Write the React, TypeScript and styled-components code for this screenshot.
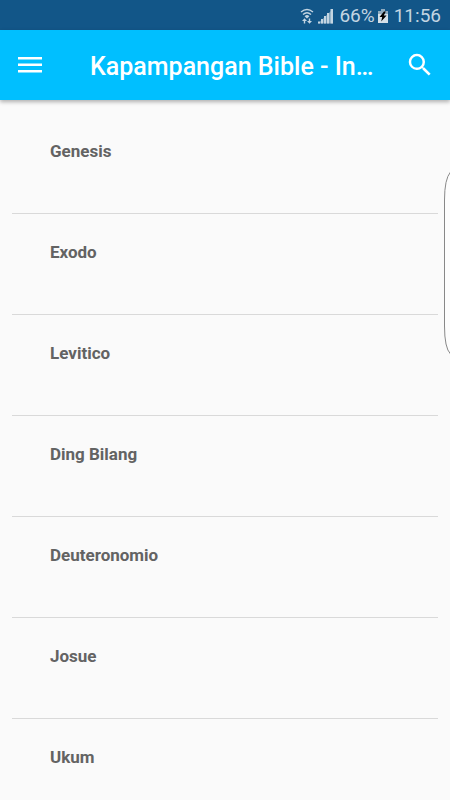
import React from "react";
import styled, { createGlobalStyle } from "styled-components";

const GlobalStyle = createGlobalStyle`
  * { box-sizing: border-box; }
  body {
    margin: 0;
    background: #fafafa;
    font-family: Roboto, "Liberation Sans", sans-serif;
  }
`;

const Screen = styled.div`
  position: relative;
  display: flex;
  flex-direction: column;
  height: 100vh;
  overflow: hidden;
`;

const StatusBar = styled.div`
  display: flex;
  flex: none;
  align-items: center;
  justify-content: flex-end;
  height: 30px;
  padding: 2px 9px 0 0;
  background: #125688;
  color: #c3d5e2;
  font-size: 19px;
  line-height: 28px;

  svg { display: block; }
`;

const StatusIcons = styled.div`
  display: flex;
  align-items: center;
  gap: 4px;
  margin-right: 5px;
`;

const Battery = styled.div`
  margin: 0 6px 0 3px;
`;

const Clock = styled.time`
  font-size: 19px;
`;

const AppBar = styled.header`
  z-index: 1;
  display: flex;
  flex: none;
  align-items: center;
  height: 70px;
  padding: 0 10px;
  background: #00bfff;
  box-shadow: 0 2px 4px rgba(0, 0, 0, 0.3);
`;

const IconButton = styled.button`
  display: flex;
  flex: none;
  align-items: center;
  justify-content: center;
  width: 40px;
  height: 48px;
  padding: 0;
  border: 0;
  background: none;
  color: #fff;
`;

const Title = styled.h1`
  flex: 1;
  min-width: 0;
  margin: 0 8px 0 40px;
  padding-top: 4px;
  overflow: hidden;
  color: #fff;
  font-size: 25px;
  font-weight: 500;
  line-height: 32px;
  white-space: nowrap;
`;

const BookList = styled.ul`
  flex: 1;
  min-height: 0;
  margin: 0;
  padding: 13px 12px 0;
  overflow-y: auto;
  scrollbar-width: none;
  list-style: none;
`;

const BookItem = styled.li`
  border-bottom: 1px solid #d9d9d9;
`;

const BookLink = styled.a`
  display: block;
  height: 100px;
  padding: 26px 38px;
  color: #636363;
  font-size: 17px;
  font-weight: 700;
  line-height: 24px;
  text-decoration: none;
`;

const EdgeHandle = styled.div`
  position: absolute;
  z-index: 2;
  top: 170px;
  right: 0;
  width: 6px;
  height: 187px;

  svg { display: block; }
`;

const books = ["Genesis", "Exodo", "Levitico", "Ding Bilang", "Deuteronomio", "Josue", "Ukum"];

function WifiIcon() {
  return (
    <svg width="14" height="16" viewBox="0 0 14 16" fill="none" stroke="currentColor" aria-hidden="true">
      <path d="M1 4Q7-1 13 4M3 6.5Q7 3 11 6.5" strokeWidth="1.4" />
      <path d="M4.6 8.2Q7 6 9.4 8.2L7 10.5Z" fill="currentColor" stroke="none" />
      <path d="M4.5 15.5v-3M9.5 10.5v3" strokeWidth="1.4" />
      <path d="M2 13L4.5 10.3 7 13ZM7 13h5L9.5 15.7Z" fill="currentColor" stroke="none" />
    </svg>
  );
}

function SignalIcon() {
  return (
    <svg width="16" height="16" viewBox="0 0 16 16" fill="currentColor" aria-hidden="true">
      <path d="M0 15.5L15 1V15.5Z" opacity=".5" />
      <path d="M0 13.5h2v2H0ZM3 11h2v4.500H3ZM6 8h2v7.500H6ZM9 5h2.200v10.500H9ZM12.500 1H15v14.500H12.500Z" />
    </svg>
  );
}

function BatteryIcon() {
  return (
    <svg width="10" height="16" viewBox="0 0 10 16" aria-hidden="true">
      <path d="M3 1h4v2h3v12H0V3h3Z" fill="#d5e0e8" />
      <path d="M3 1h4v2h3v3H0V3h3Z" fill="#8fabc0" />
      <path d="M6 3.500L1.500 9h2.700L3.200 13.500 8.600 7.500H5.800L7.800 3.500Z" fill="#000" />
    </svg>
  );
}

function MenuIcon() {
  return (
    <svg width="24" height="18" viewBox="0 0 24 18" fill="currentColor" aria-hidden="true">
      <path d="M0 1h24v2.500H0ZM0 7.500h24V10H0ZM0 14h24v2.500H0Z" />
    </svg>
  );
}

function SearchIcon() {
  return (
    <svg width="30" height="30" viewBox="0 0 24 24" fill="currentColor" aria-hidden="true">
      <path d="M15.500 14h-.79l-.28-.27A6.470 6.470 0 0 0 16 9.500 6.500 6.500 0 1 0 9.500 16c1.610 0 3.090-.59 4.230-1.570l.27.28v.79l5 4.990L20.490 19l-4.990-5zm-6 0C7.010 14 5 11.990 5 9.500S7.010 5 9.500 5 14 7.010 14 9.500 11.990 14 9.500 14z" />
    </svg>
  );
}

export default function App() {
  return (
    <Screen>
      <GlobalStyle />
      <StatusBar>
        <StatusIcons>
          <WifiIcon />
          <SignalIcon />
        </StatusIcons>
        <span>66%</span>
        <Battery>
          <BatteryIcon />
        </Battery>
        <Clock>11:56</Clock>
      </StatusBar>
      <AppBar>
        <IconButton type="button" aria-label="Menu">
          <MenuIcon />
        </IconButton>
        <Title>Kapampangan Bible - In…</Title>
        <IconButton type="button" aria-label="Search">
          <SearchIcon />
        </IconButton>
      </AppBar>
      <BookList>
        {books.map((book) => (
          <BookItem key={book}>
            <BookLink href={`#${book}`}>{book}</BookLink>
          </BookItem>
        ))}
      </BookList>
      <EdgeHandle>
        <svg width="6" height="187" viewBox="0 0 6 187" aria-hidden="true">
          <path d="M6.500 2Q.5 9 .5 30V156Q.5 178 6.500 184" fill="#fdfdfd" stroke="#888" />
        </svg>
      </EdgeHandle>
    </Screen>
  );
}
